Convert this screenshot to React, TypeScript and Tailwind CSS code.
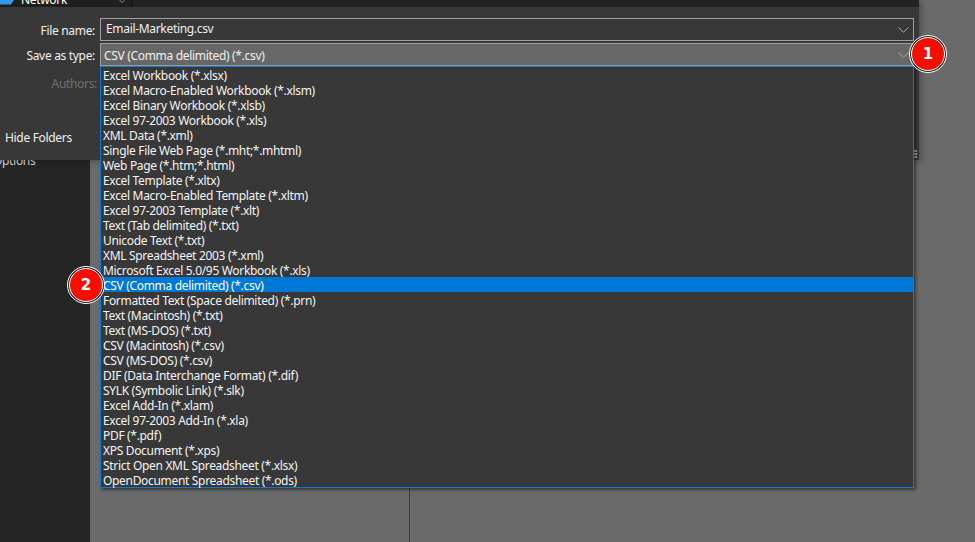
const types = [
  "Excel Workbook (*.xlsx)",
  "Excel Macro-Enabled Workbook (*.xlsm)",
  "Excel Binary Workbook (*.xlsb)",
  "Excel 97-2003 Workbook (*.xls)",
  "XML Data (*.xml)",
  "Single File Web Page (*.mht;*.mhtml)",
  "Web Page (*.htm;*.html)",
  "Excel Template (*.xltx)",
  "Excel Macro-Enabled Template (*.xltm)",
  "Excel 97-2003 Template (*.xlt)",
  "Text (Tab delimited) (*.txt)",
  "Unicode Text (*.txt)",
  "XML Spreadsheet 2003 (*.xml)",
  "Microsoft Excel 5.0/95 Workbook (*.xls)",
  "CSV (Comma delimited) (*.csv)",
  "Formatted Text (Space delimited) (*.prn)",
  "Text (Macintosh) (*.txt)",
  "Text (MS-DOS) (*.txt)",
  "CSV (Macintosh) (*.csv)",
  "CSV (MS-DOS) (*.csv)",
  "DIF (Data Interchange Format) (*.dif)",
  "SYLK (Symbolic Link) (*.slk)",
  "Excel Add-In (*.xlam)",
  "Excel 97-2003 Add-In (*.xla)",
  "PDF (*.pdf)",
  "XPS Document (*.xps)",
  "Strict Open XML Spreadsheet (*.xlsx)",
  "OpenDocument Spreadsheet (*.ods)",
];

const Chevron = () => (
  <svg width="11" height="6" viewBox="0 0 11 6" fill="none" className="shrink-0">
    <path d="M0.5 0.5L5.5 5.2L10.5 0.5" stroke="#a8a8a8" strokeWidth="1" />
  </svg>
);

const Badge = ({ n, className }: { n: number; className: string }) => (
  <div className={`absolute flex h-[38px] w-[38px] items-center justify-center rounded-full border border-white bg-[#222] ${className}`}>
    <div className="flex h-[34px] w-[34px] items-center justify-center rounded-full border border-white bg-[#f50f00] font-['DejaVu_Sans'] text-[15px] font-bold tracking-normal text-white">
      {n}
    </div>
  </div>
);

const App = () => {
  return (
    <div className="relative flex h-[542px] w-[975px] overflow-hidden bg-[#6a6a6a] font-['Noto_Sans',sans-serif] text-[12px] tracking-[-0.32px] text-[#f0f0f0]">
      {/* excel backstage behind the dialog */}
      <div className="flex h-full w-[90px] shrink-0 flex-col justify-end bg-[#252525]">
        <div className="h-[382px] overflow-hidden text-[#d8d8d8]">
          <div className="-ml-[7px] -mt-[8px]">Options</div>
        </div>
      </div>
      <div className="flex h-full flex-1 flex-col justify-end">
        <div className="ml-[319px] h-[54px] w-px bg-[#3f3f3f]" />
      </div>

      {/* save as dialog */}
      <div className="absolute left-0 top-0 h-[160px] w-[919px] bg-[#383838] shadow-[2px_1px_6px_rgba(0,0,0,0.3)]">
        <div className="flex h-[7px] bg-[#232323]">
          <div className="relative flex h-full w-[133px] overflow-hidden border-r border-[#141414] bg-[#1f1f1f]">
            <svg width="16" height="7" viewBox="0 0 16 7" className="shrink-0">
              <path d="M0 0H14L11 4.5H0Z" fill="#2f9be8" />
            </svg>
            <span className="-mt-[9px] pl-[5px] text-white">Network</span>
            <svg width="6" height="3" viewBox="0 0 6 3" className="absolute left-[119px] top-0">
              <path d="M0.5 0L3 2.5L5.5 0" fill="none" stroke="#8a8a8a" />
            </svg>
          </div>
        </div>

        <div className="flex flex-col gap-[2px] pt-[11px]">
          <div className="flex items-center">
            <span className="mt-[2px] w-[95px] text-right">File name:</span>
            <div className="ml-[5px] flex h-[23px] w-[814px] items-center justify-between border border-[#a0a0a0] bg-[#383838] pl-[5px] pr-[4px]">
              <span className="-mt-[2px]">Email-Marketing.csv</span>
              <Chevron />
            </div>
          </div>
          <div className="flex items-center">
            <span className="mt-[2px] w-[95px] text-right">Save as type:</span>
            <div className="ml-[5px] flex h-[23px] w-[814px] items-center justify-between border border-[#a0a0a0] bg-[#676767] pl-[3px] pr-[4px]">
              <span className="mt-[2px]">CSV (Comma delimited) (*.csv)</span>
              <Chevron />
            </div>
          </div>
        </div>
        <div className="mt-[9px] w-[97px] text-right text-[#6f6f6f]">Authors:</div>
        <div className="mt-[36px] pl-[5px]">Hide Folders</div>
      </div>

      {/* resize grip peeking out beside the list */}
      <div className="absolute left-[914px] top-[150px] flex w-[3px] flex-col gap-px">
        <div className="h-[2px] bg-[#a0a0a0]" />
        <div className="h-[2px] bg-[#a0a0a0]" />
        <div className="h-[2px] bg-[#a0a0a0]" />
      </div>

      {/* file type dropdown */}
      <div className="absolute left-[100px] top-[66px] w-[814px] border border-[#0f79d1] bg-[#383838] shadow-[2px_2px_3px_rgba(0,0,0,0.45)]">
        {types.map((t, i) => (
          <div
            key={t}
            className={`h-[15px] pl-[2px] pt-[2px] leading-[13px] text-[#f4f4f4] ${i === 14 ? "bg-[#0078d7] text-white" : ""}`}
          >
            {t}
          </div>
        ))}
      </div>

      <Badge n={1} className="left-[909px] top-[35px]" />
      <Badge n={2} className="left-[67px] top-[266px]" />
    </div>
  );
};

export default App;
